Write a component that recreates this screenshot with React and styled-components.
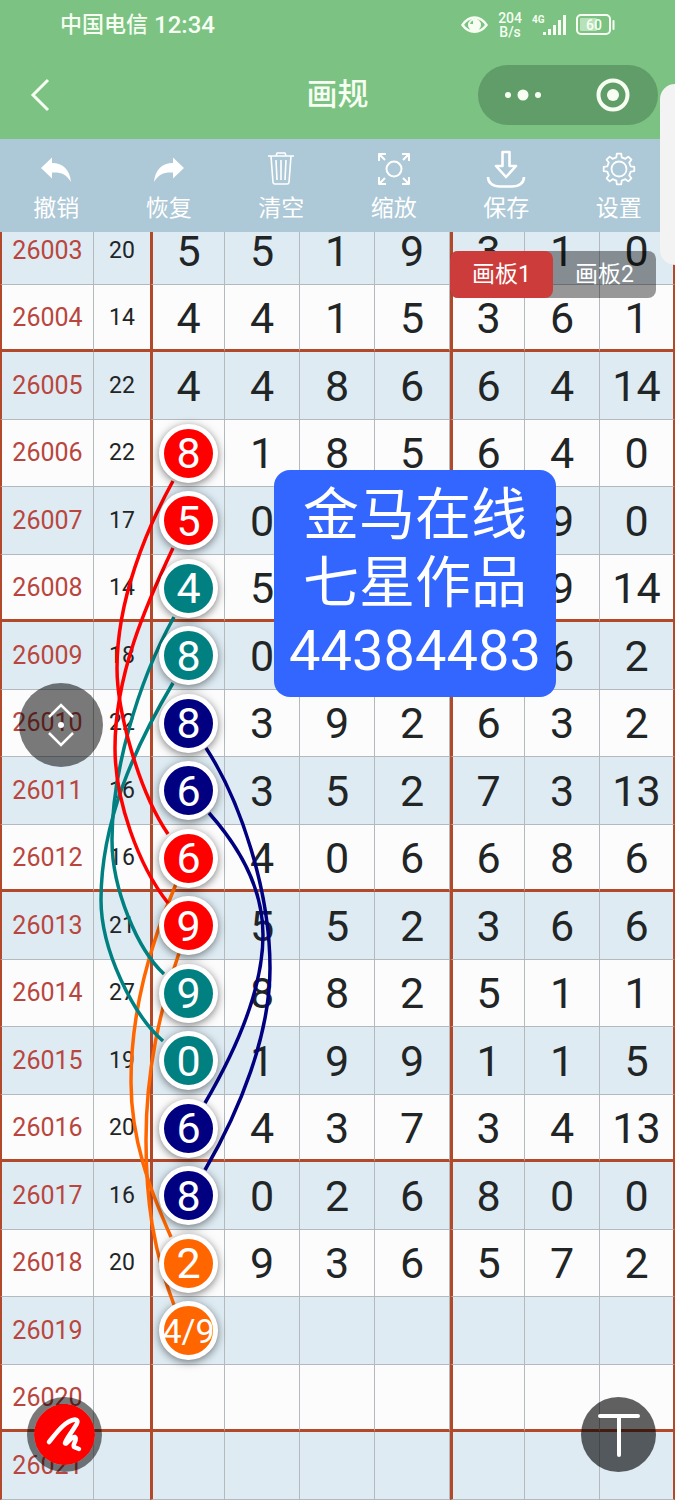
import React, { Component } from 'react';
import styled, { createGlobalStyle, css } from 'styled-components';

const GlobalStyle = createGlobalStyle`
* {
box-sizing: border-box;
}
body {
margin: 0;
background-color: #fcfcfc;
font-family: Roboto, "Noto Sans CJK SC", sans-serif;
}
button {
border: 0;
padding: 0;
margin: 0;
background: none;
color: inherit;
font: inherit;
cursor: pointer;
}
`

const Screen = styled.div`
position: relative;
min-height: 100vh;
overflow: hidden;
`

const Header = styled.header`
background-color: #7bc283;
color: #f6fff2;
`

const StatusBar = styled.div`
display: flex;
align-items: center;
justify-content: space-between;
height: 50px;
padding: 0 60px;
`

const Carrier = styled.div`
display: flex;
align-items: center;
gap: 6px;
font-size: 22px;
font-weight: 500;
line-height: 32px;
`

const Clock = styled.span`
font-size: 24px;
`

const StatusIcons = styled.div`
display: flex;
align-items: center;
gap: 10px;
`

const Speed = styled.div`
font-size: 14px;
font-weight: 500;
line-height: 14px;
text-align: center;
`

const TitleBar = styled.div`
display: grid;
grid-template-columns: 1fr auto 1fr;
align-items: center;
height: 89px;
padding: 0 17px;
`

const BackButton = styled.button`
display: flex;
justify-self: start;
padding-left: 7px;
`

const Title = styled.h1`
margin: 0;
font-size: 31px;
font-weight: 500;
line-height: 40px;
`

const Capsule = styled.div`
display: flex;
justify-self: end;
width: 180px;
height: 60px;
border-radius: 30px;
background-color: #609d68;
`

const CapsuleButton = styled.button`
flex: 1;
display: flex;
align-items: center;
justify-content: center;
`

const Toolbar = styled.nav`
position: relative;
z-index: 3;
display: grid;
grid-template-columns: repeat(6, 1fr);
height: 93px;
background-color: #adc8d6;
color: #fff;
`

const Tool = styled.button`
display: flex;
flex-direction: column;
align-items: center;
padding-top: 10px;
font-size: 23px;
line-height: 32px;
gap: 4px;
`

const Board = styled.main`
position: relative;
margin-top: -15px;
`

const Table = styled.table`
width: 100%;
table-layout: fixed;
border-collapse: separate;
border-spacing: 0;
color: #222526;
`

const Col = styled.col`
width: ${props => props.$width};
`

const Row = styled.tr`
height: 67px;
background-color: #fcfcfc;
    &:nth-child(odd) {
        height: 68px;
        background-color: #deebf3;
    }
`

const thick = '3px solid #b2492b';

const Cell = styled.td`
padding: 0;
border-bottom: 1px solid #b3b9bc;
border-right: 1px solid #b3b9bc;
text-align: center;
font-size: 43px;
line-height: 50px;
    ${props => props.$edge && css`border-left: ${thick};`}
    ${props => props.$last && css`border-right: 2px solid #b2492b;`}
    ${props => props.$rule && css`border-bottom: ${thick}; padding-top: 2px;`}
`

const Period = styled(Cell).attrs({ as: 'th', scope: 'row' })`
border-left: 2px solid #b2492b;
color: #b9463e;
font-size: 25px;
font-weight: 400;
`

const Sum = styled(Cell)`
border-right: 0;
font-size: 23px;
`

const Ball = styled.span`
position: relative;
z-index: 2;
display: flex;
align-items: center;
justify-content: center;
width: 59px;
height: 59px;
margin: 0 auto;
border: 5px solid #fff;
border-radius: 50%;
box-shadow: 0 2px 8px rgba(0, 0, 0, 0.5);
background-color: ${props => props.$color};
color: #fff;
font-size: ${props => props.$small ? '34px' : '43px'};
`

const Curves = styled.svg`
position: absolute;
z-index: 1;
top: 0;
left: 0;
pointer-events: none;
`

const Panels = styled.div`
position: absolute;
z-index: 3;
top: 34px;
right: 19px;
display: flex;
width: 206px;
height: 47px;
border-radius: 8px;
background-color: rgba(0, 0, 0, 0.4);
`

const PanelTab = styled.button`
flex: 1;
border-radius: 8px;
background-color: ${props => props.$active ? '#cc3c3b' : 'transparent'};
color: #fff;
font-size: 23px;
line-height: 47px;
`

const Note = styled.div`
position: absolute;
z-index: 3;
top: 253px;
left: 274px;
width: 282px;
padding: 11px 0 12px;
border-radius: 16px;
background-color: #3366ff;
color: #fff;
font-size: 56px;
line-height: 68px;
text-align: center;
`

const RoundButton = styled.button`
position: absolute;
z-index: 3;
display: flex;
align-items: center;
justify-content: center;
width: ${props => props.$size};
height: ${props => props.$size};
border-radius: 50%;
`

const MoveButton = styled(RoundButton)`
top: 466px;
left: 19px;
background-color: rgba(0, 0, 0, 0.52);
`

const PenButton = styled(RoundButton)`
bottom: 28px;
left: 27px;
border: 7px solid rgba(0, 0, 0, 0.52);
background-color: #ff0000;
background-clip: padding-box;
`

const TextButton = styled(RoundButton)`
bottom: 28px;
right: 19px;
background-color: rgba(0, 0, 0, 0.62);
`

const SideHandle = styled.div`
position: absolute;
z-index: 4;
top: 84px;
right: 0;
width: 15px;
height: 181px;
border-radius: 15px 0 0 15px;
background-color: #f3f3f4;
`

const RED = '#ff0000';
const TEAL = '#008080';
const NAVY = '#000080';
const ORANGE = '#ff6600';

const rows = [
    { id: '26003', sum: 20, nums: [5, 5, 1, 9, 3, 1, 0] },
    { id: '26004', sum: 14, nums: [4, 4, 1, 5, 3, 6, 1] },
    { id: '26005', sum: 22, nums: [4, 4, 8, 6, 6, 4, 14] },
    { id: '26006', sum: 22, nums: [8, 1, 8, 5, 6, 4, 0], color: RED },
    { id: '26007', sum: 17, nums: [5, 0, '', '', '', 9, 0], color: RED },
    { id: '26008', sum: 14, nums: [4, 5, '', '', '', 9, 14], color: TEAL },
    { id: '26009', sum: 18, nums: [8, 0, '', '', '', 6, 2], color: TEAL },
    { id: '26010', sum: 22, nums: [8, 3, 9, 2, 6, 3, 2], color: NAVY },
    { id: '26011', sum: 16, nums: [6, 3, 5, 2, 7, 3, 13], color: NAVY },
    { id: '26012', sum: 16, nums: [6, 4, 0, 6, 6, 8, 6], color: RED },
    { id: '26013', sum: 21, nums: [9, 5, 5, 2, 3, 6, 6], color: RED },
    { id: '26014', sum: 27, nums: [9, 8, 8, 2, 5, 1, 1], color: TEAL },
    { id: '26015', sum: 19, nums: [0, 1, 9, 9, 1, 1, 5], color: TEAL },
    { id: '26016', sum: 20, nums: [6, 4, 3, 7, 3, 4, 13], color: NAVY },
    { id: '26017', sum: 16, nums: [8, 0, 2, 6, 8, 0, 0], color: NAVY },
    { id: '26018', sum: 20, nums: [2, 9, 3, 6, 5, 7, 2], color: ORANGE },
    { id: '26019', sum: '', nums: ['4/9', '', '', '', '', '', ''], color: ORANGE },
    { id: '26020', sum: '', nums: ['', '', '', '', '', '', ''] },
    { id: '26021', sum: '', nums: ['', '', '', '', '', '', ''] },
];

const curves = [
    { color: ORANGE, d: 'M176 884C150 945 131 1010 131 1082C131 1140 150 1190 171 1237' },
    { color: ORANGE, d: 'M180 950C160 1010 146 1070 146 1140C146 1200 153 1250 174 1305' },
    { color: TEAL, d: 'M174 617C136 685 112 775 112 840C112 890 138 950 164 974' },
    { color: TEAL, d: 'M173 683C136 745 101 820 101 900C101 950 133 1015 163 1041' },
    { color: RED, d: 'M173 481C146 530 117 600 117 668C117 710 138 790 168 834' },
    { color: RED, d: 'M173 548C146 605 115 675 115 748C115 800 138 865 168 903' },
    { color: NAVY, d: 'M206 748C240 800 270 890 270 968C270 1035 240 1110 205 1170' },
    { color: NAVY, d: 'M209 813C242 850 263 890 263 935C263 990 236 1050 205 1103' },
];

// eight rounded teeth around the hub
const gearPath = () => {
    const points = [];
    for (let i = 0; i < 8; i++) {
        [[-13, 12], [-8, 15.5], [8, 15.5], [13, 12]].forEach(([deg, r]) => {
            const a = (i * 45 + deg - 90) * Math.PI / 180;
            points.push(`${(18 + r * Math.cos(a)).toFixed(1)} ${(18 + r * Math.sin(a)).toFixed(1)}`);
        });
    }
    return `M${points.join('L')}Z`;
}

const ToolIcon = ({ children }) => (
    <svg width="40" height="40" viewBox="-2 -2 40 40" fill="none" stroke="currentColor" strokeWidth="2" strokeLinejoin="round" aria-hidden="true">
        {children}
    </svg>
)

const arrow = 'M3 17L14 6.500V12C25 12 32 19 33 31C28 23 23 21 14 21.500V27.500Z';

const tools = [
    { name: '撤销', icon: <path d={arrow} fill="currentColor" stroke="none" /> },
    { name: '恢复', icon: <path d={arrow} fill="currentColor" stroke="none" transform="translate(36 0) scale(-1 1)" /> },
    {
        name: '清空',
        icon: <path strokeWidth="1.6" d="M5 5H31M13 5L14 2H22L23 5M8 5L10 31.500Q10.200 33 12 33H24Q25.800 33 26 31.500L28 5M13 9L14 29M18 9V29M23 9L22 29" />
    },
    {
        name: '缩放',
        icon: <path d="M3 10V3H10M3 3L9 9M26 3H33V10M33 3L27 9M3 26V33H10M3 33L9 27M26 33H33V26M33 33L27 27M25.500 18A7.500 7.500 0 1 1 10.500 18A7.500 7.500 0 1 1 25.500 18Z" />
    },
    {
        name: '保存',
        icon: <path strokeWidth="2.600" d="M14.500 1H21.500V15H28L18 26L8 15H14.500ZM0 26C0 32 5 35.500 12 35.500H24C31 35.500 36 32 36 26" />
    },
    {
        name: '设置',
        icon: <g strokeWidth="1.800"><path d={gearPath()} /><circle cx="18" cy="18" r="7.500" /></g>
    },
];

const StatusSymbols = () => (
    <StatusIcons>
        <svg width="27" height="22" viewBox="0 0 27 22" fill="none" stroke="currentColor" strokeWidth="2.500" aria-hidden="true">
            <path d="M1.500 11C8 1 19 1 25.500 11C19 20 8 20 1.500 11Z" />
            <circle cx="13.500" cy="11" r="6.500" fill="currentColor" stroke="none" />
            <path d="M9 10A4 4 0 0 1 12 6.500V10Z" fill="#7bc283" stroke="none" />
        </svg>
        <Speed>204<br />B/s</Speed>
        <svg width="34" height="24" viewBox="0 0 34 24" fill="currentColor" aria-hidden="true">
            <text x="0" y="10" fontFamily="Roboto" fontSize="10" fontWeight="700">4G</text>
            <path d="M11 19h3v3H11zM16 16h3v6H16zM21 12h3v10h-3zM26 7h3v15h-3zM31 2h3v20h-3z" />
        </svg>
        <svg width="39" height="22" viewBox="0 0 39 22" fill="none" aria-hidden="true">
            <rect x="1" y="1" width="33" height="19" rx="4" stroke="currentColor" strokeWidth="2" />
            <rect x="4" y="4" width="17" height="13" rx="1" fill="currentColor" opacity="0.5" />
            <path d="M37.500 7V15" stroke="currentColor" strokeWidth="2" strokeLinecap="round" />
            <text x="18" y="16" textAnchor="middle" fontFamily="Roboto" fontSize="14" fontWeight="500" fill="currentColor">60</text>
        </svg>
    </StatusIcons>
)

class DrawBoard extends Component {
    renderRow(row, index) {
        const rule = index % 4 === 1;
        return (
            <Row key={row.id}>
                <Period $rule={rule}>{row.id}</Period>
                <Sum $rule={rule}>{row.sum}</Sum>
                {row.nums.map((num, i) => (
                    <Cell key={i} $rule={rule} $edge={i === 0 || i === 4} $last={i === 6}>
                        {i === 0 && row.color
                            ? <Ball $color={row.color} $small={String(num).length > 1}>{num}</Ball>
                            : num}
                    </Cell>
                ))}
            </Row>
        )
    }

    render() {
        return (
            <Board>
                <Table>
                    <colgroup>
                        <Col $width="94px" />
                        <Col $width="56px" />
                        <Col span={7} />
                    </colgroup>
                    <tbody>
                        {rows.map((row, index) => this.renderRow(row, index))}
                    </tbody>
                </Table>
                <Curves width="675" height="1283" viewBox="0 217 675 1283" fill="none" strokeWidth="3.500" aria-hidden="true">
                    {curves.map(curve => <path key={curve.d} d={curve.d} stroke={curve.color} />)}
                </Curves>
                <Panels>
                    <PanelTab $active>画板1</PanelTab>
                    <PanelTab>画板2</PanelTab>
                </Panels>
                <Note>金马在线<br />七星作品<br />44384483</Note>
                <MoveButton $size="84px" aria-label="移动">
                    <svg width="30" height="46" viewBox="0 0 30 46" fill="none" stroke="#fff" strokeWidth="2.500">
                        <path d="M3 15L15 3L27 15M3 31L15 43L27 31" />
                        <circle cx="15" cy="23" r="3" fill="#fff" stroke="none" />
                    </svg>
                </MoveButton>
                <PenButton $size="75px" aria-label="画笔">
                    <svg width="40" height="40" viewBox="0 0 40 40" fill="none" stroke="#fff" strokeWidth="4.500" strokeLinecap="round" strokeLinejoin="round">
                        <path d="M4 27C10 20 19 6 30 4.500C38 5 24 18 20 28C21 31 26 21 30 22C33 24 27 30 29 32L34 34" />
                    </svg>
                </PenButton>
                <TextButton $size="75px" aria-label="文字">
                    <svg width="46" height="46" viewBox="0 0 46 46" fill="none" stroke="#fff" strokeWidth="4" strokeLinecap="round">
                        <path d="M4 4H42M23 4V43" />
                    </svg>
                </TextButton>
            </Board>
        )
    }
}

class App extends Component {
    render() {
        return (
            <Screen>
                <GlobalStyle />
                <Header>
                    <StatusBar>
                        <Carrier>中国电信 <Clock>12:34</Clock></Carrier>
                        <StatusSymbols />
                    </StatusBar>
                    <TitleBar>
                        <BackButton aria-label="返回">
                            <svg width="32" height="36" viewBox="0 0 32 36" fill="none" stroke="currentColor" strokeWidth="3">
                                <path d="M24 3L9 18L24 33" />
                            </svg>
                        </BackButton>
                        <Title>画规</Title>
                        <Capsule>
                            <CapsuleButton aria-label="更多">
                                <svg width="40" height="12" viewBox="0 0 40 12" fill="currentColor">
                                    <circle cx="5" cy="6" r="3" />
                                    <circle cx="20" cy="6" r="5.500" />
                                    <circle cx="35" cy="6" r="3" />
                                </svg>
                            </CapsuleButton>
                            <CapsuleButton aria-label="关闭">
                                <svg width="34" height="34" viewBox="0 0 34 34" fill="none">
                                    <circle cx="17" cy="17" r="14.500" stroke="currentColor" strokeWidth="4" />
                                    <circle cx="17" cy="17" r="6" fill="currentColor" />
                                </svg>
                            </CapsuleButton>
                        </Capsule>
                    </TitleBar>
                </Header>
                <Toolbar>
                    {tools.map(tool => (
                        <Tool key={tool.name}>
                            <ToolIcon>{tool.icon}</ToolIcon>
                            {tool.name}
                        </Tool>
                    ))}
                </Toolbar>
                <DrawBoard />
                <SideHandle />
            </Screen>
        )
    }
}

export default App;
